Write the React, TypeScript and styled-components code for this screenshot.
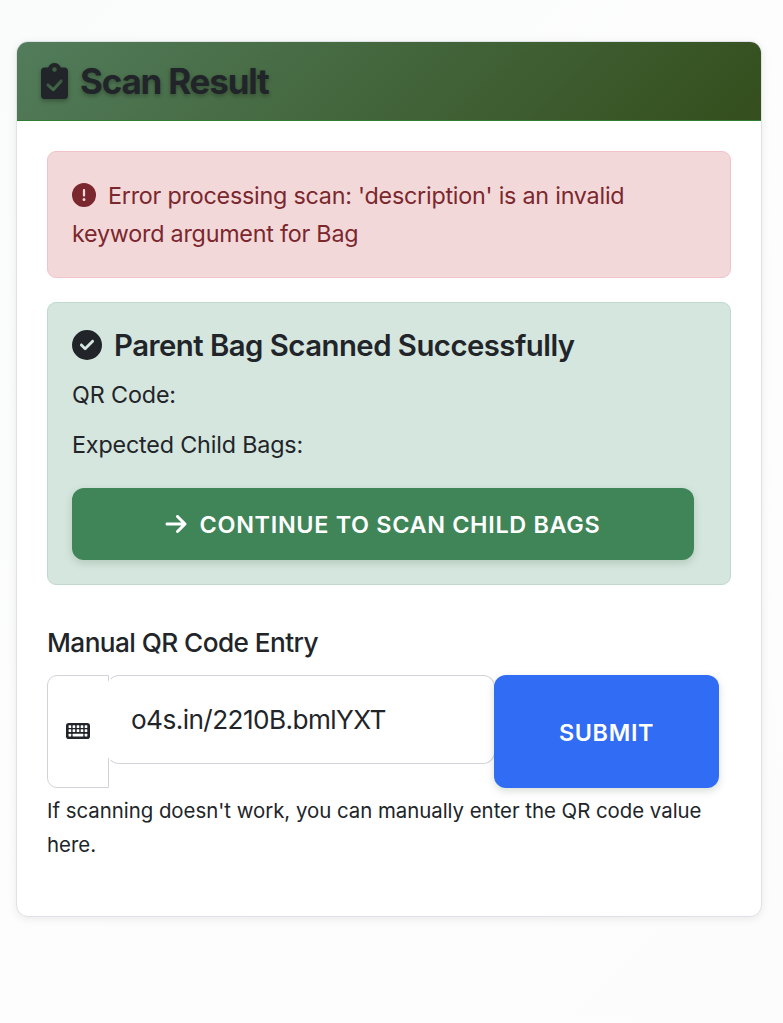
import React from "react";
import styled, { createGlobalStyle } from "styled-components";
import { FaCircleExclamation, FaCircleCheck, FaArrowRight } from "react-icons/fa6";

const Global = createGlobalStyle`
  * { box-sizing: border-box; }
  body {
    margin: 0;
    min-height: 1023px;
    background: linear-gradient(135deg, #fafbfb 0%, #fdfdfd 50%, #fcfcfc 100%);
    color: #212529;
    font-family: Inter, "Liberation Sans", sans-serif;
    font-size: 23.3px;
    line-height: 38px;
  }
  h2, h4, p { margin: 0; }
`;

const Line = styled.span<{ $track?: number }>`
  display: block;
  white-space: nowrap;
  letter-spacing: ${(p) => p.$track ?? 0}px;
`;

const Page = styled.main`
  padding: 41px 21px 0 16px;
`;

const Card = styled.section`
  width: 746px;
  height: 876px;
  border: 1px solid #dee2e6;
  border-radius: 12px;
  background: #fff;
  overflow: hidden;
  box-shadow: 0 2px 8px rgba(0, 0, 0, 0.08);
`;

const CardHeader = styled.header`
  display: flex;
  align-items: center;
  gap: 12px;
  height: 79px;
  padding: 0 24px;
  border-bottom: 1px solid #2e7d32;
  background: linear-gradient(135deg, #527c5b 0%, #344e1c 100%);
`;

const HeaderIcon = styled.svg`
  width: 27px;
  height: 36px;
  filter: drop-shadow(0 2px 2px rgba(0, 0, 0, 0.3));
`;

const Title = styled.h2`
  font-size: 35px;
  line-height: 44px;
  font-weight: 700;
  text-shadow: 0 2px 4px rgba(0, 0, 0, 0.3);
`;

const CardBody = styled.div`
  padding: 30px;
`;

const Alert = styled.div<{ $tone: "danger" | "success" }>`
  width: 684px;
  height: ${(p) => (p.$tone === "danger" ? 127 : 283)}px;
  margin-bottom: 24px;
  padding: 24px;
  border: 1px solid ${(p) => (p.$tone === "danger" ? "#f1c2c7" : "#bfdacc")};
  border-radius: 9px;
  background: ${(p) => (p.$tone === "danger" ? "#f3d8da" : "#d5e6de")};
  color: ${(p) => (p.$tone === "danger" ? "#7a272d" : "#212529")};
`;

const IconRow = styled.div`
  display: flex;
  align-items: center;
  gap: 12px;
`;

const Message = styled.div`
  line-height: 38px;
  padding-top: 1px;
  ${IconRow} svg { margin-top: -2px; }
`;

const AlertTitle = styled.h4`
  padding-top: 2px;
  font-size: 29.3px;
  line-height: 34px;
  font-weight: 600;
`;

const Detail = styled.p`
  margin-top: 12px;
`;

const Details = styled.div`
  padding-top: 1px;
`;

const Button = styled.button<{ $variant: "success" | "primary" }>`
  display: flex;
  align-items: center;
  justify-content: center;
  gap: 12px;
  width: ${(p) => (p.$variant === "success" ? 622 : 225)}px;
  height: ${(p) => (p.$variant === "success" ? 72 : 113)}px;
  padding: 1px 0 0;
  border: 0;
  border-radius: 12px;
  background: ${(p) => (p.$variant === "success" ? "#408558" : "#316cf4")};
  color: #fff;
  font: 600 23.4px/36px Inter, sans-serif;
  box-shadow: 0 3px 8px rgba(30, 70, 30, 0.18);
`;

const Continue = styled(Button)`
  margin-top: 24px;
  padding-right: 2px;
  svg { margin-top: -2px; }
`;

const FieldLabel = styled.label`
  display: block;
  margin-top: 39px;
  font-size: 26.2px;
  font-weight: 500;
`;

const InputGroup = styled.div`
  display: flex;
  align-items: flex-start;
  margin-top: 13px;
`;

const Addon = styled.span`
  display: flex;
  align-items: center;
  justify-content: center;
  width: 62px;
  height: 113px;
  padding-bottom: 1px;
  border: 1px solid #d0d3d8;
  border-radius: 10px 0 0 10px;
`;

const Input = styled.input`
  width: 388px;
  height: 89px;
  margin-left: -2px;
  padding: 0 23px 1px;
  border: 1px solid #d0d3d8;
  border-left-color: transparent;
  border-radius: 12px;
  background: #fff;
  color: #212529;
  font: 400 26.2px/38px Inter, sans-serif;
  letter-spacing: -0.58px;
  outline: 0;
`;

const Submit = styled(Button)`
  margin-left: -1px;
  padding-top: 2px;
`;

const Help = styled.p`
  margin-top: 6px;
  font-size: 20.4px;
  line-height: 34px;
`;

function ClipboardCheck() {
  return (
    <HeaderIcon viewBox="0 0 384 512" aria-hidden="true">
      <defs>
        <mask id="check-cutout">
          <rect width="384" height="512" fill="#fff" />
          <circle cx="192" cy="94" r="32" fill="#000" />
          <path d="M98 312l76 68 112-124" fill="none" stroke="#000" strokeWidth="44" strokeLinecap="round" strokeLinejoin="round" />
        </mask>
      </defs>
      <path
        mask="url(#check-cutout)"
        fill="currentColor"
        d="M336 64h-53.9C268.9 26.8 233.7 0 192 0s-76.9 26.8-90.1 64H48C21.5 64 0 85.5 0 112v352c0 26.5 21.5 48 48 48h288c26.5 0 48-21.5 48-48V112c0-26.5-21.5-48-48-48z"
      />
    </HeaderIcon>
  );
}

const KEY_COLUMNS = [2.6, 6.6, 10.7, 14.7, 18.7];

function Keyboard() {
  return (
    <svg width="24" height="16" viewBox="0 0 24 16" aria-hidden="true">
      <rect width="24" height="16" rx="2.8" fill="currentColor" />
      <g fill="#fff">
        {[2.3, 6.3].map((y) =>
          KEY_COLUMNS.map((x) => <rect key={`${x}-${y}`} x={x} y={y} width="2.6" height="2.6" rx="0.5" />)
        )}
        <rect x="2.6" y="10.8" width="2.6" height="2.6" rx="0.5" />
        <rect x="6.6" y="10.8" width="10.7" height="2.6" rx="0.5" />
        <rect x="18.7" y="10.8" width="2.6" height="2.6" rx="0.5" />
      </g>
    </svg>
  );
}

export default function App() {
  return (
    <Page>
      <Global />
      <Card>
        <CardHeader>
          <ClipboardCheck />
          <Title><Line $track={-1.2}>Scan Result</Line></Title>
        </CardHeader>
        <CardBody>
          <Alert $tone="danger">
            <Message>
              <IconRow>
                <FaCircleExclamation size={24} />
                <Line $track={-0.22}>Error processing scan: 'description' is an invalid</Line>
              </IconRow>
              <Line $track={-0.22}>keyword argument for Bag</Line>
            </Message>
          </Alert>
          <Alert $tone="success">
            <IconRow>
              <FaCircleCheck size={30} />
              <AlertTitle><Line $track={-0.5}>Parent Bag Scanned Successfully</Line></AlertTitle>
            </IconRow>
            <Details>
              <Detail><Line $track={-0.12}>QR Code:</Line></Detail>
              <Detail><Line $track={-0.16}>Expected Child Bags:</Line></Detail>
            </Details>
            <Continue $variant="success">
              <FaArrowRight size={24} />
              <Line $track={0.68}>CONTINUE TO SCAN CHILD BAGS</Line>
            </Continue>
          </Alert>
          <FieldLabel htmlFor="qr"><Line $track={-0.57}>Manual QR Code Entry</Line></FieldLabel>
          <InputGroup>
            <Addon><Keyboard /></Addon>
            <Input id="qr" defaultValue="o4s.in/2210B.bmlYXT" />
            <Submit $variant="primary"><Line $track={0.65}>SUBMIT</Line></Submit>
          </InputGroup>
          <Help>
            <Line $track={-0.02}>If scanning doesn't work, you can manually enter the QR code value</Line>
            <Line>here.</Line>
          </Help>
        </CardBody>
      </Card>
    </Page>
  );
}
